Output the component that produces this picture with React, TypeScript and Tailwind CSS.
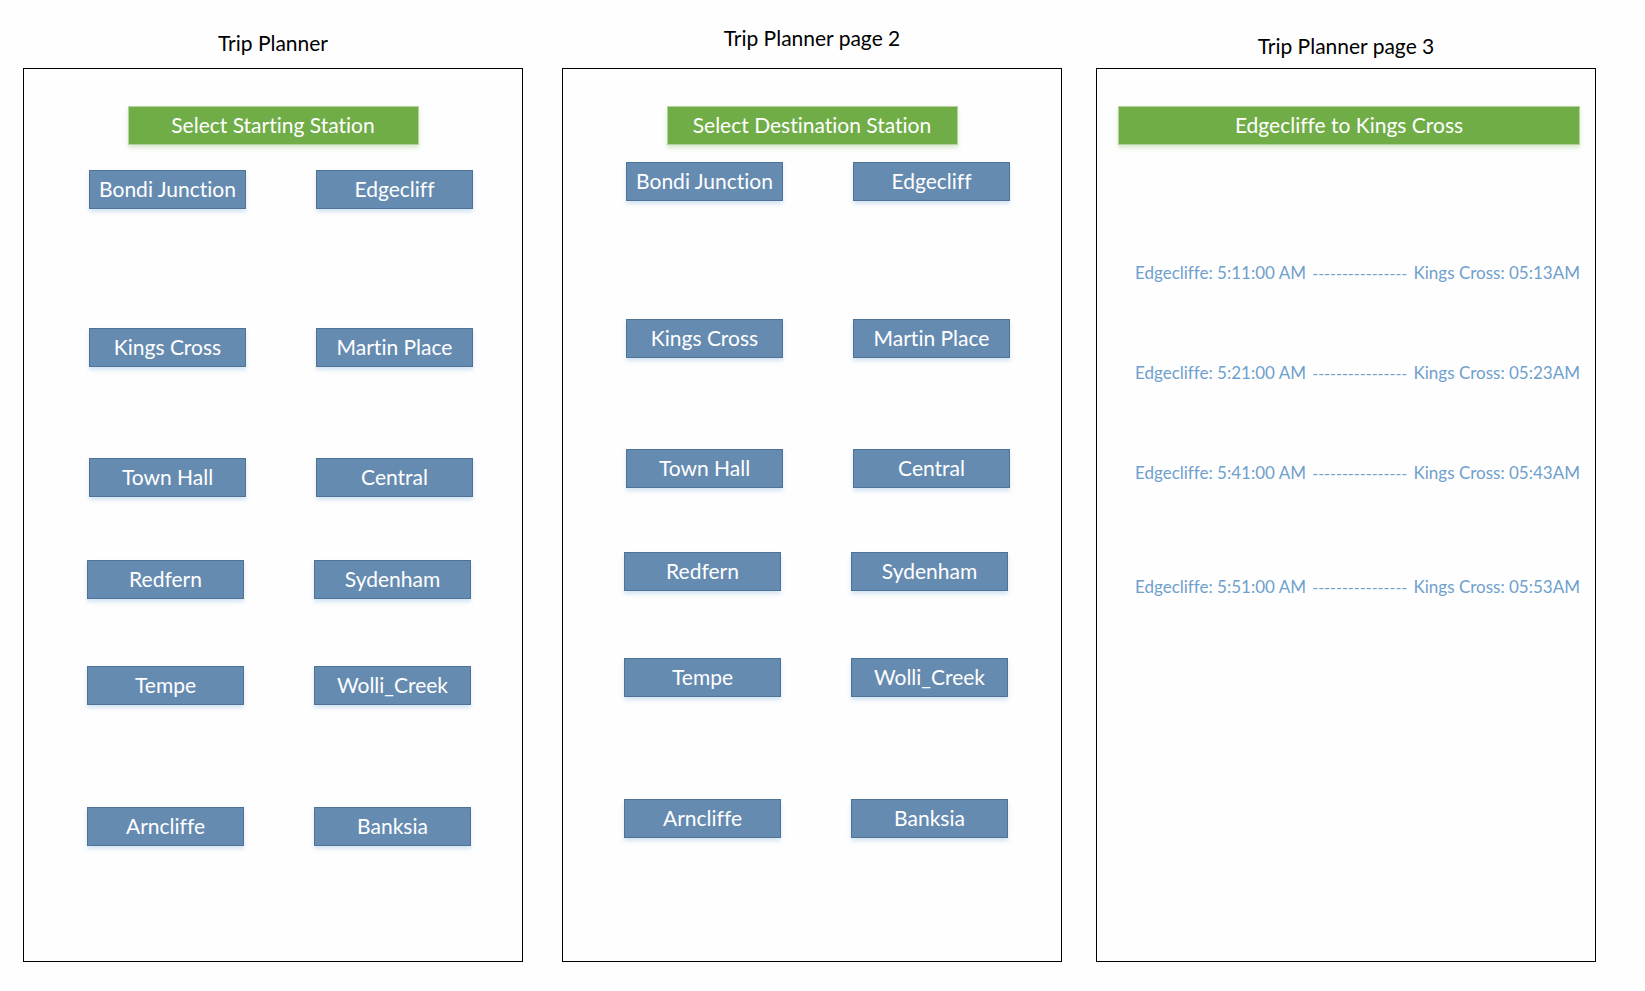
import React from "react";

type StationRow = { gap: string; shift: string; stations: [string, string] };

const startRows: StationRow[] = [
  { gap: "mt-[25px]", shift: "pl-4", stations: ["Bondi Junction", "Edgecliff"] },
  { gap: "mt-[119px]", shift: "pl-4", stations: ["Kings Cross", "Martin Place"] },
  { gap: "mt-[91px]", shift: "pl-4", stations: ["Town Hall", "Central"] },
  { gap: "mt-[63px]", shift: "pl-3", stations: ["Redfern", "Sydenham"] },
  { gap: "mt-[67px]", shift: "pl-3", stations: ["Tempe", "Wolli_Creek"] },
  { gap: "mt-[102px]", shift: "pl-3", stations: ["Arncliffe", "Banksia"] },
];

const destinationRows: StationRow[] = [
  { gap: "mt-[17px]", shift: "pl-3", stations: ["Bondi Junction", "Edgecliff"] },
  { gap: "mt-[118px]", shift: "pl-3", stations: ["Kings Cross", "Martin Place"] },
  { gap: "mt-[91px]", shift: "pl-3", stations: ["Town Hall", "Central"] },
  { gap: "mt-[64px]", shift: "pl-2", stations: ["Redfern", "Sydenham"] },
  { gap: "mt-[67px]", shift: "pl-2", stations: ["Tempe", "Wolli_Creek"] },
  { gap: "mt-[102px]", shift: "pl-2", stations: ["Arncliffe", "Banksia"] },
];

const trips = [
  { gap: "mt-[116px]", from: "Edgecliffe: 5:11:00 AM", to: "Kings Cross: 05:13AM" },
  { gap: "mt-[76px]", from: "Edgecliffe: 5:21:00 AM", to: "Kings Cross: 05:23AM" },
  { gap: "mt-[76px]", from: "Edgecliffe: 5:41:00 AM", to: "Kings Cross: 05:43AM" },
  { gap: "mt-[90px]", from: "Edgecliffe: 5:51:00 AM", to: "Kings Cross: 05:53AM" },
];

function Page({
  title,
  titleSpace,
  className,
  children,
}: {
  title: string;
  titleSpace: string;
  className?: string;
  children: React.ReactNode;
}) {
  return (
    <section className={`flex min-w-0 flex-1 flex-col ${className ?? ""}`}>
      <div className="flex h-[68px] flex-col justify-end">
        <h2 className={`text-center text-[21px] leading-6 text-black ${titleSpace}`}>{title}</h2>
      </div>
      <div className="flex flex-1 flex-col border border-black pt-[37px]">{children}</div>
    </section>
  );
}

function Banner({ className, children }: { className: string; children: React.ReactNode }) {
  return (
    <h3
      className={`flex h-[39px] items-center justify-center border border-[#b5d3a0] bg-[#70ad47] pb-[2px] text-[21px] leading-6 text-white shadow-[0_3px_4px_rgba(112,173,71,0.25)] ${className}`}
    >
      {children}
    </h3>
  );
}

function Stations({ rows }: { rows: StationRow[] }) {
  return (
    <>
      {rows.map((row) => (
        <div key={row.stations[0]} className={`flex justify-center gap-[70px] ${row.gap} ${row.shift}`}>
          {row.stations.map((name) => (
            <button
              key={name}
              type="button"
              className="h-[39px] w-[157px] border border-[#4f7396] bg-[#668bb1] pb-[2px] text-[21px] leading-6 whitespace-nowrap text-white shadow-[0_3px_4px_rgba(91,155,213,0.25)]"
            >
              {name}
            </button>
          ))}
        </div>
      ))}
    </>
  );
}

export default function App() {
  return (
    <main className="flex min-h-screen bg-[#fefefe] pr-[49px] pb-[29px] pl-[23px] font-['Lato','Liberation_Sans',sans-serif] [font-variant-ligatures:none]">
      <Page title="Trip Planner" titleSpace="mb-[13px]">
        <Banner className="w-[291px] self-center">Select Starting Station</Banner>
        <Stations rows={startRows} />
      </Page>
      <Page title="Trip Planner page 2" titleSpace="mb-[18px]" className="ml-[39px]">
        <Banner className="w-[291px] self-center">Select Destination Station</Banner>
        <Stations rows={destinationRows} />
      </Page>
      <Page title="Trip Planner page 3" titleSpace="mb-[10px]" className="ml-[34px]">
        <Banner className="mr-[15px] ml-[21px]">Edgecliffe to Kings Cross</Banner>
        <ul className="mr-[15px] ml-[38px] text-[17px] leading-6 whitespace-nowrap text-[#6ea0cd]">
          {trips.map((trip) => (
            <li key={trip.from} className={`flex justify-between ${trip.gap}`}>
              <span>{trip.from}</span>
              <span className="text-base">----------------</span>
              <span>{trip.to}</span>
            </li>
          ))}
        </ul>
      </Page>
    </main>
  );
}
